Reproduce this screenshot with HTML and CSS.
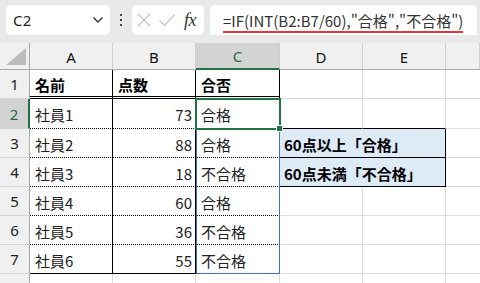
FILE: index.html
```html
<!DOCTYPE html>
<html lang="ja">
<head>
<meta charset="utf-8">
<link rel="stylesheet" href="styles.css">
</head>
<body>
<div class="app">
  <div class="toolbar">
    <div class="namebox">
      <span class="nb-text">C2</span>
      <svg class="chev" width="12" height="8" viewBox="0 0 12 8"><path d="M1.5 1.5 L6 6 L10.5 1.5" fill="none" stroke="#333" stroke-width="1.4"/></svg>
    </div>
    <div class="dots"><i></i><i></i><i></i></div>
    <div class="fxbox">
      <svg width="16" height="16" viewBox="0 0 16 16"><path d="M2 2 L14 14 M14 2 L2 14" stroke="#c4c4c4" stroke-width="1.2" fill="none"/></svg>
      <svg width="18" height="16" viewBox="0 0 18 16"><path d="M1.5 8.5 L6.5 13.5 L16.5 2.5" stroke="#c4c4c4" stroke-width="1.2" fill="none"/></svg>
      <span class="fx">fx</span>
    </div>
    <div class="formula">
      <span class="ftext">=IF(INT(B2:B7/60),"合格","不合格")</span>
    </div>
  </div>
  <div class="sheet">
    <div class="grid">
      <div class="corner"><svg width="20" height="17" viewBox="0 0 20 17"><polygon points="20,0 20,17 0,17" fill="#bcbcbc"/></svg></div>
      <div class="ch">A</div>
      <div class="ch">B</div>
      <div class="ch sel">C</div>
      <div class="ch">D</div>
      <div class="ch">E</div>
      <div class="ch last"></div>

      <div class="rh">1</div>
      <div class="c t hd b-top">名前</div>
      <div class="c t hd b-top">点数</div>
      <div class="c t hd b-top tc">合否</div>
      <div class="c"></div>
      <div class="c"></div>
      <div class="c last"></div>

      <div class="rh sel">2</div>
      <div class="c t">社員1</div>
      <div class="c t num">73</div>
      <div class="c t tc">合格</div>
      <div class="c bb"></div>
      <div class="c bb"></div>
      <div class="c last"></div>

      <div class="rh">3</div>
      <div class="c t">社員2</div>
      <div class="c t num">88</div>
      <div class="c t tc">合格</div>
      <div class="c note">60点以上「合格」</div>
      <div class="c last"></div>

      <div class="rh">4</div>
      <div class="c t">社員3</div>
      <div class="c t num">18</div>
      <div class="c t tc">不合格</div>
      <div class="c note">60点未満「不合格」</div>
      <div class="c last"></div>

      <div class="rh">5</div>
      <div class="c t">社員4</div>
      <div class="c t num">60</div>
      <div class="c t tc">合格</div>
      <div class="c"></div>
      <div class="c"></div>
      <div class="c last"></div>

      <div class="rh">6</div>
      <div class="c t">社員5</div>
      <div class="c t num">36</div>
      <div class="c t tc">不合格</div>
      <div class="c"></div>
      <div class="c"></div>
      <div class="c last"></div>

      <div class="rh">7</div>
      <div class="c t end">社員6</div>
      <div class="c t end num">55</div>
      <div class="c t end tc">不合格</div>
      <div class="c"></div>
      <div class="c"></div>
      <div class="c last"></div>

      <div class="rh">8</div>
      <div class="c"></div>
      <div class="c"></div>
      <div class="c"></div>
      <div class="c"></div>
      <div class="c"></div>
      <div class="c last"></div>
    </div>
    <div class="spill"></div>
    <div class="active"><span class="handle"></span></div>
  </div>
</div>
</body>
</html>
```

FILE: styles.css
```css
html, body {
  margin: 0;
  padding: 0;
}
body {
  width: 480px;
  height: 283px;
  overflow: hidden;
  background: #ffffff;
  font-family: "Noto Sans CJK JP", "Noto Sans", sans-serif;
  color: #111;
}
.app {
  width: 480px;
  height: 283px;
  display: flex;
  flex-direction: column;
}
.toolbar {
  height: 43px;
  box-sizing: border-box;
  background: #e9e9e9;
  display: flex;
  align-items: flex-start;
  padding: 5px 3px 0 6px;
}
.namebox {
  width: 104px;
  height: 30px;
  box-sizing: border-box;
  background: #fff;
  border-radius: 5px;
  display: flex;
  align-items: center;
  justify-content: space-between;
  padding: 0 6px 0 7px;
  font-size: 15px;
  color: #222;
}
.nb-text {
  font-family: "Noto Sans", sans-serif;
  letter-spacing: 0.2px;
}
.dots {
  width: 22px;
  height: 30px;
  display: flex;
  flex-direction: column;
  align-items: center;
  justify-content: center;
  gap: 3px;
}
.dots i {
  width: 2px;
  height: 2px;
  background: #444;
  display: block;
}
.fxbox {
  width: 72px;
  height: 30px;
  box-sizing: border-box;
  background: #fff;
  border-radius: 5px;
  display: flex;
  align-items: center;
  padding: 0 0 0 4px;
  gap: 6px;
}
.fx {
  font-family: "Liberation Serif", serif;
  font-style: italic;
  font-size: 18px;
  color: #333;
  margin-left: 2px;
  letter-spacing: -0.5px;
}
.formula {
  margin-left: 6px;
  flex: 1;
  height: 30px;
  box-sizing: border-box;
  background: #fff;
  border-radius: 5px 5px 0 0;
  display: flex;
  align-items: center;
  padding-left: 13px;
}
.ftext {
  font-size: 15px;
  color: #333;
  border-bottom: 2px solid #e5383b;
  line-height: 20px;
  padding-top: 3px;
  white-space: nowrap;
}
.sheet {
  position: relative;
  flex: 1;
  overflow: hidden;
}
.grid {
  display: grid;
  grid-template-columns: 30px 83px 83px 84px 83px 83px 1fr;
  grid-template-rows: 27px 29px 30px 29px 29px 29px 29px 29px 29px;
}
.grid > div {
  box-sizing: border-box;
}
.corner {
  background: #f0f0f0;
  border-right: 1px solid #a9a9a9;
  border-bottom: 1px solid #a9a9a9;
  display: flex;
  align-items: flex-end;
  justify-content: flex-end;
  padding: 0 3px 4px 0;
}
.ch {
  background: #f0f0f0;
  border-right: 1px solid #cdcdcd;
  border-bottom: 1px solid #a9a9a9;
  display: flex;
  align-items: center;
  justify-content: center;
  font-family: "Noto Sans", sans-serif;
  font-size: 15px;
  color: #111;
  padding-top: 1px;
}
.ch.sel {
  background: #d3d3d3;
  border-bottom: 2px solid #217346;
  color: #1e6b44;
}
.rh {
  background: #f0f0f0;
  border-right: 1px solid #a9a9a9;
  border-bottom: 1px solid #d4d4d4;
  display: flex;
  align-items: center;
  justify-content: center;
  font-family: "Noto Sans", sans-serif;
  font-size: 15px;
  color: #222;
}
.rh.sel {
  background: #d3d3d3;
  border-right: 2px solid #217346;
  color: #1e6b44;
}
.c {
  border-right: 1px solid #dadada;
  border-bottom: 1px solid #dadada;
  display: flex;
  align-items: center;
  padding: 2px 4px 0 5px;
  font-size: 15px;
  color: #222;
  white-space: nowrap;
}
.c.last {
  border-right: none;
}
.c.t {
  border-right: 1px solid #000;
  border-bottom: 1px dotted #000;
}
.c.t.hd {
  border-bottom: 3px double #000;
  font-weight: bold;
  color: #000;
}
.c.t.end {
  border-bottom: 1px solid #000;
}
.c.num {
  justify-content: flex-end;
  padding-right: 3px;
}
.c.bb {
  border-bottom: 1px solid #000;
}
.c.note {
  grid-column: span 2;
  background: #ddebf7;
  border-right: 1px solid #000;
  border-bottom: 1px solid #000;
  font-weight: bold;
  color: #000;
  padding-left: 4px;
}
.spill {
  position: absolute;
  left: 196px;
  top: 56px;
  width: 84px;
  height: 175px;
  box-sizing: border-box;
  border: 1px solid #3c6fd0;
  pointer-events: none;
}
.active {
  position: absolute;
  left: 195px;
  top: 55px;
  width: 86px;
  height: 32px;
  box-sizing: border-box;
  border: 2px solid #217346;
}
.handle {
  position: absolute;
  right: -4px;
  bottom: -4px;
  width: 5px;
  height: 5px;
  background: #217346;
  border: 1px solid #fff;
}
```
